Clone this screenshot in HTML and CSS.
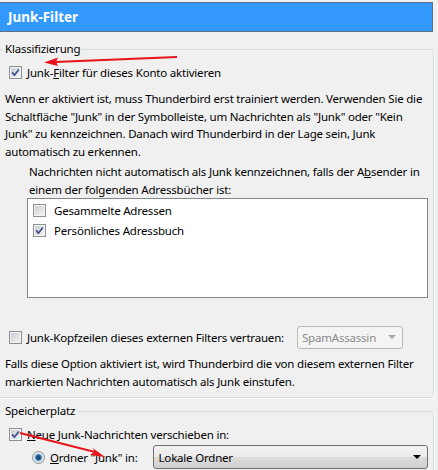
FILE: index.html
```html
<!DOCTYPE html>
<html lang="de">
<head>
<meta charset="utf-8">
<title>Junk-Filter</title>
<link rel="stylesheet" href="styles.css">
</head>
<body>
<div class="page">
  <div class="titlebar">Junk-Filter</div>

  <fieldset class="group">
    <legend>Klassifizierung</legend>
    <div class="row row-check">
      <span class="cb"><svg viewBox="0 0 11 11"><path d="M2.2 5.4 L4.4 8.2 L8.8 2.4"/></svg></span>
      <span>Junk-<u>F</u>ilter für dieses Konto aktivieren</span>
    </div>
    <p class="desc">Wenn er aktiviert ist, muss Thunderbird erst trainiert werden. Verwenden Sie die<br>Schaltfläche "Junk" in der Symbolleiste, um Nachrichten als "Junk" oder "Kein<br>Junk" zu kennzeichnen. Danach wird Thunderbird in der Lage sein, Junk<br>automatisch zu erkennen.</p>
    <div class="indent">
      <p class="desc sub">Nachrichten nicht automatisch als Junk kennzeichnen, falls der A<u>b</u>sender in<br>einem der folgenden Adressbücher ist:</p>
      <div class="listbox">
        <div class="item"><span class="cb"></span><span>Gesammelte Adressen</span></div>
        <div class="item"><span class="cb"><svg viewBox="0 0 11 11"><path d="M2.2 5.4 L4.4 8.2 L8.8 2.4"/></svg></span><span>Persönliches Adressbuch</span></div>
      </div>
    </div>
    <div class="row row-trust">
      <span class="cb"></span>
      <span><u>J</u>unk-Kopfzeilen dieses externen Filters vertrauen:</span>
      <div class="combo combo-disabled"><span>SpamAssassin</span><i class="arrow"></i></div>
    </div>
    <p class="desc desc-last">Falls diese Option aktiviert ist, wird Thunderbird die von diesem externen Filter<br>markierten Nachrichten automatisch als Junk einstufen.</p>
  </fieldset>

  <fieldset class="group group2">
    <legend>Speicherplatz</legend>
    <div class="row row-check">
      <span class="cb"><svg viewBox="0 0 11 11"><path d="M2.2 5.4 L4.4 8.2 L8.8 2.4"/></svg></span>
      <span><u>N</u>eue Junk-Nachrichten verschieben in:</span>
    </div>
    <div class="row row-radio">
      <span class="radio"></span>
      <span><u>O</u>rdner "Junk" in:</span>
      <div class="combo combo-folder"><span>Lokale Ordner</span><i class="arrow"></i></div>
    </div>
  </fieldset>

  <svg class="arrows" width="438" height="470" viewBox="0 0 438 470">
    <path class="arrow-line" d="M177 57 L55 62"/>
    <path class="arrow-head" d="M44 62.5 L58 57.5 L56 61.5 L58 66 Z"/>
    <path class="arrow-line" d="M20 433 L95 452"/>
    <path class="arrow-head" d="M105 457 L92 447.5 L95 451.5 L90 455 Z"/>
  </svg>
</div>
</body>
</html>
```

FILE: styles.css
```css
html, body {
  margin: 0;
  padding: 0;
  background: #f0f0f0;
}
body {
  width: 438px;
  height: 470px;
  overflow: hidden;
  font-family: "Noto Sans", "DejaVu Sans", sans-serif;
  font-size: 11.5px;
  letter-spacing: -0.2px;
  color: #000;
}
.page {
  position: relative;
  width: 438px;
  height: 470px;
  overflow: hidden;
}
.titlebar {
  margin: 2px 5px 0 -1px;
  height: 28px;
  line-height: 28px;
  border: 1px solid #5d7186;
  background: #3399ff;
  color: #fff;
  font-weight: bold;
  font-size: 13.5px;
  letter-spacing: 0;
  padding-left: 8px;
}
.group {
  margin: 9px 4px 0 -3px;
  padding: 0 5px 7px 7px;
  border: 1px solid #d5dfe5;
  border-radius: 3px;
  box-shadow: 1px 1px 0 #fff;
  min-width: 0;
}
.group legend {
  padding: 0 2px;
  margin-left: -2px;
  line-height: 16px;
}
.group2 {
  margin-top: 5px;
  height: 80px;
}
.row {
  display: flex;
  align-items: center;
  white-space: nowrap;
}
.row-check {
  margin-top: 6px;
  height: 18px;
  padding-left: 4px;
  gap: 5px;
}
.desc {
  margin: 9px 0 0;
  line-height: 17.5px;
  white-space: nowrap;
}
.indent {
  margin-left: 22px;
}
.desc.sub {
  margin-top: 3px;
  padding-left: 2px;
}
.listbox {
  height: 97px;
  border: 1px solid #828790;
  background: #fff;
  padding-top: 1px;
  box-sizing: content-box;
}
.item {
  display: flex;
  align-items: center;
  height: 20px;
  padding-left: 5px;
  gap: 8px;
}
.cb {
  flex: none;
  display: inline-block;
  width: 13px;
  height: 13px;
  box-sizing: border-box;
  border: 1px solid #8e8f8f;
  background: linear-gradient(135deg, #c4c8cd 0%, #e4e6e8 60%, #f4f4f4 100%);
  box-shadow: inset 0 0 0 1px #f4f4f4;
}
.cb svg {
  display: block;
  width: 11px;
  height: 11px;
}
.cb path {
  fill: none;
  stroke: #3c4f8a;
  stroke-width: 1.7;
}
.row-trust {
  margin-top: 27px;
  height: 24px;
  padding-left: 4px;
  gap: 5px;
}
.combo {
  box-sizing: border-box;
  display: flex;
  align-items: center;
  justify-content: space-between;
  border-radius: 3px;
}
.combo-disabled {
  margin-left: 8px;
  width: 106px;
  height: 23px;
  border: 1px solid #b5b9bd;
  background: #f4f4f4;
  color: #8a8a8a;
  padding: 0 6px 0 4px;
}
.combo-disabled .arrow {
  border-top-color: #a8a8a8;
}
.arrow {
  width: 0;
  height: 0;
  border-left: 4px solid transparent;
  border-right: 4px solid transparent;
  border-top: 4px solid #000;
}
.desc-last {
  margin-top: 6px;
}
.row-radio {
  margin-top: 2px;
  height: 24px;
  padding-left: 27px;
  gap: 5px;
}
.radio {
  flex: none;
  width: 13px;
  height: 13px;
  box-sizing: border-box;
  border-radius: 50%;
  border: 1px solid #8e8f8f;
  background: radial-gradient(circle, #1c4d7c 0, #1c4d7c 2px, #5b9bd0 3px, #c9d8e6 4px, #f2f2f2 5.5px);
}
.combo-folder {
  margin-left: 10px;
  width: 276px;
  height: 24px;
  border: 1px solid #707070;
  background: linear-gradient(#f2f2f2 0%, #ebebeb 50%, #dddddd 50%, #cfcfcf 100%);
  padding: 0 6px 0 5px;
}
.arrows {
  position: absolute;
  left: 0;
  top: 0;
  pointer-events: none;
}
.arrow-line {
  stroke: #e8141b;
  stroke-width: 2;
  fill: none;
}
.arrow-head {
  fill: #e8141b;
}
```
